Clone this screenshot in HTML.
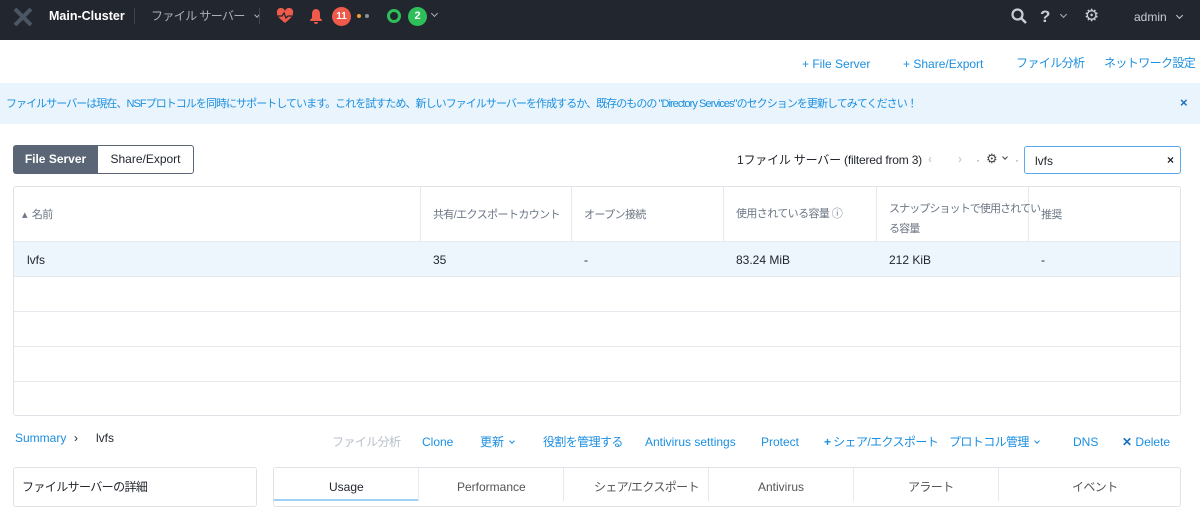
<!DOCTYPE html>
<html><head><meta charset="utf-8"><style>
*{box-sizing:border-box;margin:0;padding:0}
body{width:1200px;height:501px;overflow:hidden;background:#fff;font-family:"Liberation Sans","Noto Sans CJK JP",sans-serif;font-size:12px;line-height:14px;color:#22272e;position:relative}
.a{position:absolute;white-space:nowrap}
.j{letter-spacing:-0.6px}
.nav{position:absolute;left:0;top:0;width:1200px;height:40px;background:#22272f;color:#fff}
.blue{color:#1b8fe0}
.tbl{position:absolute;left:13px;top:186px;width:1168px;height:230px;border:1px solid #dfe3e8;border-radius:3px}
.hl{position:absolute;left:0;width:100%;border-top:1px solid #e6e9ed}
.vl{position:absolute;top:0;height:54px;border-left:1px solid #e6e9ed}
.th{color:#6b7685;font-size:11px;letter-spacing:-0.6px}
.chev{display:inline-block;width:6px;height:6px;border-right:1.5px solid currentColor;border-bottom:1.5px solid currentColor;transform:rotate(45deg);vertical-align:3px;margin-left:6px}
</style></head><body>
<div class="nav">
<svg class="a" style="left:13px;top:8px" width="20" height="18" viewBox="0 0 20 18"><path d="M2 1L18 17M18 1L2 17" stroke="#4c5563" stroke-width="4"/></svg>
<div class="a" style="left:49px;top:9px;font-weight:bold;font-size:12.5px">Main-Cluster</div>
<div class="a" style="left:134px;top:8px;height:16px;border-left:1px solid #3d4550"></div>
<div class="a j" style="left:151px;top:9px;color:#a9b0ba;font-size:12px">ファイル サーバー<span class="chev" style="width:4px;height:4px;margin-left:10px"></span></div>
<div class="a" style="left:259px;top:8px;height:16px;border-left:1px solid #3d4550"></div>
<svg class="a" style="left:276px;top:8px" width="18" height="16" viewBox="0 0 18 16"><path d="M9 15C3 10 1 8 1 5A4 4 0 0 1 9 3A4 4 0 0 1 17 5C17 8 15 10 9 15Z" fill="#f05a4a"/><path d="M2 8H6L8 5L10 10L12 8H16" stroke="#22272f" stroke-width="1.3" fill="none"/></svg>
<svg class="a" style="left:309px;top:8px" width="14" height="16" viewBox="0 0 14 16"><path d="M7 1C4 1 3 4 3 6V10L1 12V13H13V12L11 10V6C11 4 10 1 7 1Z M5 14H9A2 2 0 0 1 5 14Z" fill="#f05a4a"/></svg>
<div class="a" style="left:332px;top:7px;width:19px;height:19px;border-radius:50%;background:#f05a4a;color:#fff;font-size:10px;text-align:center;line-height:19px;font-weight:bold">11</div>
<div class="a" style="left:357px;top:14px;width:4px;height:4px;border-radius:50%;background:#f0a030"></div>
<div class="a" style="left:365px;top:14px;width:4px;height:4px;border-radius:50%;background:#8a939e"></div>
<div class="a" style="left:387px;top:9px;width:14px;height:14px;border-radius:50%;border:3px solid #2fbf5a"></div>
<div class="a" style="left:408px;top:7px;width:19px;height:19px;border-radius:50%;background:#2fbf5a;color:#fff;font-size:11px;text-align:center;line-height:19px;font-weight:bold">2</div>
<div class="a" style="left:426px;top:8px;color:#a9b0ba"><span class="chev" style="width:5px;height:5px"></span></div>
<svg class="a" style="left:1011px;top:8px" width="16" height="16" viewBox="0 0 16 16"><circle cx="6.5" cy="6.5" r="5" stroke="#c9ced5" stroke-width="2.2" fill="none"/><path d="M10 10L15 15" stroke="#c9ced5" stroke-width="2.5"/></svg>
<div class="a" style="left:1040px;top:8px;color:#c9ced5;font-size:17px;line-height:17px;font-weight:bold">?</div>
<div class="a" style="left:1055px;top:9px;color:#a9b0ba"><span class="chev" style="width:5px;height:5px"></span></div>
<div class="a" style="left:1084px;top:7px;color:#c9ced5;font-size:17px;line-height:17px">⚙</div>
<div class="a" style="left:1134px;top:10px;color:#c9ced5;font-size:12px">admin<span class="chev" style="width:5px;height:5px;margin-left:10px"></span></div>
</div>
<div class="a blue" style="left:802px;top:57px">+ File Server</div>
<div class="a blue" style="left:903px;top:57px">+ Share/Export</div>
<div class="a blue j" style="left:1016px;top:56px">ファイル分析</div>
<div class="a blue j" style="left:1104px;top:56px">ネットワーク設定</div>
<div class="a" style="left:0;top:83px;width:1200px;height:41px;background:#e9f4fc"></div>
<div class="a" style="left:6px;top:97px;color:#1b8fe0;font-size:11px;letter-spacing:-0.95px">ファイルサーバーは現在、NSFプロトコルを同時にサポートしています。これを試すため、新しいファイルサーバーを作成するか、既存のものの "Directory Services"のセクションを更新してみてください！</div>
<div class="a" style="left:1180px;top:96px;color:#1b6fc0;font-weight:bold;font-size:13px">×</div>
<div class="a" style="left:13px;top:145px;width:85px;height:29px;background:#5a6676;color:#fff;border-radius:3px 0 0 3px;text-align:center;line-height:29px;font-weight:bold">File Server</div>
<div class="a" style="left:97px;top:145px;width:97px;height:29px;border:1px solid #5a6676;border-radius:0 3px 3px 0;text-align:center;line-height:27px">Share/Export</div>
<div class="a" style="left:737px;top:153px;letter-spacing:-0.2px">1ファイル サーバー (filtered from 3)</div>
<div class="a" style="left:912px;top:153px;color:#888">·</div>
<div class="a" style="left:928px;top:152px;color:#ccd;font-weight:bold">‹</div>
<div class="a" style="left:958px;top:152px;color:#ccd;font-weight:bold">›</div>
<div class="a" style="left:976px;top:153px;color:#888">·</div>
<div class="a" style="left:986px;top:152px;color:#444;font-size:13px">⚙</div>
<div class="a" style="left:997px;top:151px;color:#444"><span class="chev" style="width:4px;height:4px"></span></div>
<div class="a" style="left:1015px;top:153px;color:#888">·</div>
<div class="a" style="left:1024px;top:146px;width:157px;height:28px;border:1px solid #59a9ef;border-radius:3px"></div>
<div class="a" style="left:1035px;top:154px">lvfs</div>
<div class="a" style="left:1167px;top:153px;font-weight:bold">×</div>
<div class="tbl">
<div class="vl" style="left:406px"></div><div class="vl" style="left:557px"></div><div class="vl" style="left:709px"></div><div class="vl" style="left:862px"></div><div class="vl" style="left:1014px"></div>
<div class="a" style="left:0;top:54px;width:1166px;height:35px;background:#eef6fd"></div>
<div class="hl" style="top:54px"></div><div class="hl" style="top:89px"></div><div class="hl" style="top:124px"></div><div class="hl" style="top:159px"></div><div class="hl" style="top:194px"></div>
<div class="a th" style="left:8px;top:21px">▴ &nbsp;名前</div>
<div class="a th" style="left:419px;top:21px">共有/エクスポートカウント</div>
<div class="a th" style="left:570px;top:21px">オープン接続</div>
<div class="a th" style="left:722px;top:20px">使用されている容量 ⓘ</div>
<div class="a th" style="left:875px;top:12px;line-height:20px;letter-spacing:-0.9px">スナップショットで使用されてい<br>る容量</div>
<div class="a th" style="left:1027px;top:21px">推奨</div>
<div class="a" style="left:13px;top:66px">lvfs</div>
<div class="a" style="left:419px;top:66px">35</div>
<div class="a" style="left:570px;top:66px">-</div>
<div class="a" style="left:722px;top:66px">83.24 MiB</div>
<div class="a" style="left:875px;top:66px">212 KiB</div>
<div class="a" style="left:1027px;top:66px">-</div>
</div>
<div class="a blue" style="left:15px;top:431px">Summary</div>
<div class="a" style="left:74px;top:431px">›</div>
<div class="a" style="left:96px;top:431px">lvfs</div>
<div class="a j" style="left:332px;top:435px;color:#b8c0ca">ファイル分析</div>
<div class="a blue" style="left:422px;top:435px">Clone</div>
<div class="a blue" style="left:480px;top:435px">更新<span class="chev" style="width:4px;height:4px"></span></div>
<div class="a blue j" style="left:543px;top:435px">役割を管理する</div>
<div class="a blue" style="left:645px;top:435px">Antivirus settings</div>
<div class="a blue" style="left:761px;top:435px">Protect</div>
<div class="a blue j" style="left:824px;top:435px"><b>+</b> シェア/エクスポート</div>
<div class="a blue j" style="left:949px;top:435px">プロトコル管理<span class="chev" style="width:4px;height:4px"></span></div>
<div class="a blue" style="left:1073px;top:435px">DNS</div>
<div class="a blue" style="left:1122px;top:435px"><b style="color:#1b6fc0">✕</b> Delete</div>
<div class="a" style="left:13px;top:467px;width:244px;height:40px;border:1px solid #dfe3e8;border-radius:3px"></div>
<div class="a j" style="left:22px;top:480px">ファイルサーバーの詳細</div>
<div class="a" style="left:273px;top:467px;width:908px;height:40px;border:1px solid #dfe3e8;border-radius:3px"></div>
<div class="a" style="left:274px;top:499px;width:144px;border-top:2px solid #9fd0f5"></div>
<div class="a" style="left:418px;top:468px;width:1px;height:33px;background:#e6e9ed"></div>
<div class="a" style="left:563px;top:468px;width:1px;height:33px;background:#e6e9ed"></div>
<div class="a" style="left:708px;top:468px;width:1px;height:33px;background:#e6e9ed"></div>
<div class="a" style="left:853px;top:468px;width:1px;height:33px;background:#e6e9ed"></div>
<div class="a" style="left:998px;top:468px;width:1px;height:33px;background:#e6e9ed"></div>
<div class="a" style="left:329px;top:480px">Usage</div>
<div class="a" style="left:457px;top:480px;color:#555">Performance</div>
<div class="a j" style="left:594px;top:480px;color:#555">シェア/エクスポート</div>
<div class="a" style="left:758px;top:480px;color:#555">Antivirus</div>
<div class="a j" style="left:908px;top:480px;color:#555">アラート</div>
<div class="a j" style="left:1072px;top:480px;color:#555">イベント</div>
</body></html>
